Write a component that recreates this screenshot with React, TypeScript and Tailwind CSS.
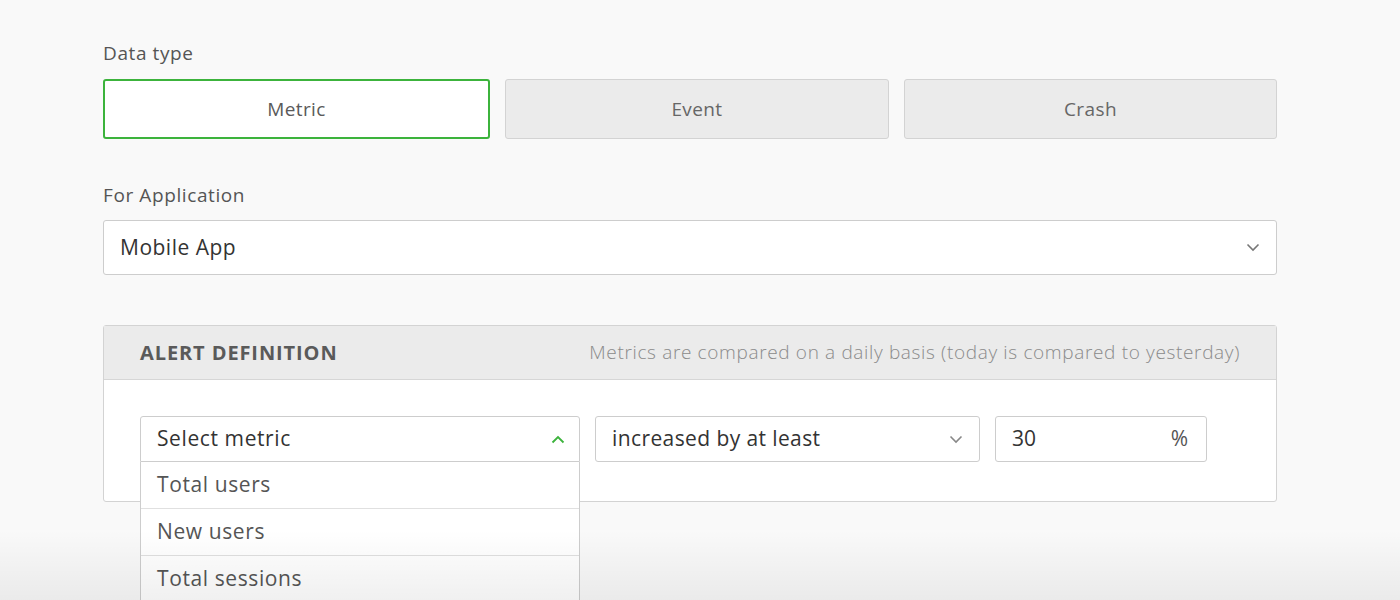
import React from 'react';

const font = { fontFamily: '"Open Sans", "Noto Sans", sans-serif' };

const ChevronDown = ({ className = '' }: { className?: string }) => (
  <svg width="14" height="9" viewBox="0 0 14 9" fill="none" className={className}>
    <path d="M1.5 1.5 7 7l5.5-5.5" stroke="currentColor" strokeWidth="1.6" />
  </svg>
);

const ChevronUp = ({ className = '' }: { className?: string }) => (
  <svg width="14" height="9" viewBox="0 0 14 9" fill="none" className={className}>
    <path d="M1.5 7.5 7 2l5.5 5.5" stroke="currentColor" strokeWidth="1.8" />
  </svg>
);

const dataTypes = [
  { label: 'Metric', width: 'w-[388px]', active: true },
  { label: 'Event', width: 'w-[385px]', active: false },
  { label: 'Crash', width: 'w-[374px]', active: false },
];

const metrics = ['Total users', 'New users', 'Total sessions'];

export default function App() {
  return (
    <div
      className="relative w-[1400px] h-[600px] overflow-hidden bg-[#f9f9f9] text-[#555]"
      style={font}
    >
      <div className="pl-[103px] pt-[41px] w-[1277px]">
        <div className="text-[19px] leading-6 tracking-[0.6px] text-[#555]">Data type</div>
        <div className="mt-[14px] flex gap-[15px]">
          {dataTypes.map((t) => (
            <div
              key={t.label}
              className={`${t.width} h-[60px] flex items-center justify-center rounded-[3px] text-[19px] tracking-[0.4px] ${
                t.active
                  ? 'bg-white border-2 border-[#3cb33c] text-[#5a5a5a]'
                  : 'bg-[#ebebeb] border border-[#d3d3d3] text-[#666]'
              }`}
            >
              {t.label}
            </div>
          ))}
        </div>

        <div className="mt-[44px] text-[19px] leading-6 tracking-[0.6px] text-[#555]">For Application</div>
        <div className="mt-[13px] h-[55px] bg-white border border-[#cdcdcd] rounded-[3px] flex items-center justify-between pl-[16px] pr-[16px]">
          <span className="text-[21px] tracking-[0.5px] text-[#333]">Mobile App</span>
          <ChevronDown className="text-[#777]" />
        </div>

        <div className="mt-[50px] border border-[#d3d3d3] rounded-[3px] bg-white">
          <div className="h-[54px] bg-[#ebebeb] border-b border-[#d6d6d6] flex items-center justify-between pl-[36px] pr-[36px]">
            <span className="text-[20px] font-bold text-[#5a5a5a] tracking-[0.9px]">ALERT DEFINITION</span>
            <span className="text-[19px] font-light tracking-[0.65px] text-[#8a8a8a]">
              Metrics are compared on a daily basis (today is compared to yesterday)
            </span>
          </div>
          <div className="h-[121px] pl-[36px] pt-[36px] flex gap-[15px]">
            <div className="relative w-[440px]">
              <div className="h-[46px] bg-white border border-[#cdcdcd] rounded-t-[3px] flex items-center justify-between pl-[16px] pr-[14px]">
                <span className="text-[21px] tracking-[0.6px] text-[#333]">Select metric</span>
                <ChevronUp className="text-[#3cb33c]" />
              </div>
              <div className="absolute left-0 top-[46px] w-[440px] bg-white border-x border-[#cdcdcd] z-10">
                {metrics.map((m) => (
                  <div
                    key={m}
                    className="h-[47px] border-b border-[#e0e0e0] flex items-center pl-[16px] text-[21px] tracking-[0.6px] text-[#555]"
                  >
                    {m}
                  </div>
                ))}
              </div>
            </div>
            <div className="w-[385px] h-[46px] bg-white border border-[#cdcdcd] rounded-[3px] flex items-center justify-between pl-[16px] pr-[16px]">
              <span className="text-[21px] tracking-[0.4px] text-[#333]">increased by at least</span>
              <ChevronDown className="text-[#888]" />
            </div>
            <div className="w-[212px] h-[46px] bg-white border border-[#cdcdcd] rounded-[3px] flex items-center justify-between pl-[16px] pr-[18px]">
              <span className="text-[21px] text-[#333]">30</span>
              <span className="text-[21px] text-[#555]">%</span>
            </div>
          </div>
        </div>
      </div>

      <div className="pointer-events-none absolute left-0 right-0 bottom-0 h-[70px] bg-gradient-to-b from-transparent to-[rgba(0,0,0,0.06)] z-20" />
    </div>
  );
}
